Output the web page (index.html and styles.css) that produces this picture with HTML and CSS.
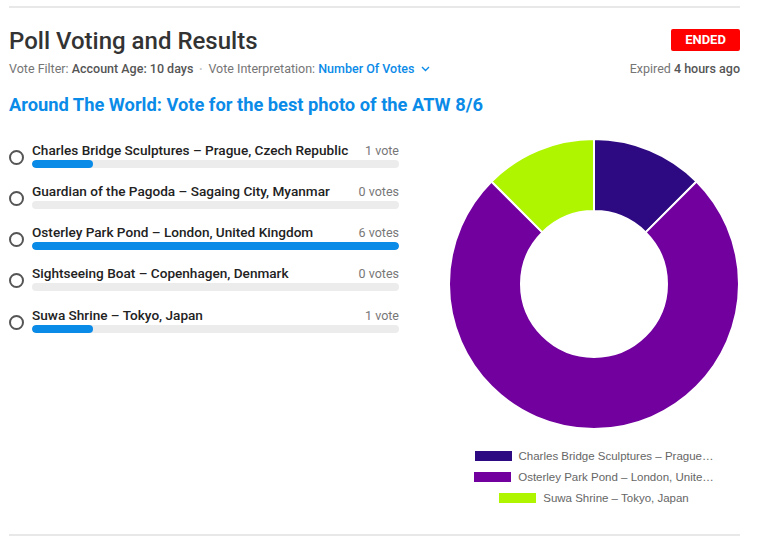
FILE: index.html
```html
<!DOCTYPE html>
<html>
<head>
<meta charset="utf-8">
<link rel="stylesheet" href="styles.css">
</head>
<body>
<div class="poll">
  <div class="header">
    <div class="header-left">
      <h1 class="title">Poll Voting and Results</h1>
      <div class="meta">
        <span>Vote Filter: </span><span class="strong">Account Age: 10 days</span>
        <span class="dot">•</span>
        <span>Vote Interpretation: </span><span class="link">Number Of Votes</span>
        <svg class="chev" width="9" height="6" viewBox="0 0 9 6"><path d="M1 1 L4.5 4.5 L8 1" fill="none" stroke="#0b8be8" stroke-width="1.4"/></svg>
      </div>
    </div>
    <div class="header-right">
      <div class="badge">ENDED</div>
      <div class="expired">Expired <span class="strong">4 hours ago</span></div>
    </div>
  </div>
  <h2 class="question">Around The World: Vote for the best photo of the ATW 8/6</h2>
  <div class="body">
    <div class="options">
      <div class="option">
        <span class="radio"></span>
        <div class="opt-main">
          <div class="opt-line"><span class="opt-label">Charles Bridge Sculptures – Prague, Czech Republic</span><span class="opt-count">1 vote</span></div>
          <div class="bar"><div class="fill" style="width:16.67%"></div></div>
        </div>
      </div>
      <div class="option">
        <span class="radio"></span>
        <div class="opt-main">
          <div class="opt-line"><span class="opt-label">Guardian of the Pagoda – Sagaing City, Myanmar</span><span class="opt-count">0 votes</span></div>
          <div class="bar"><div class="fill" style="width:0%"></div></div>
        </div>
      </div>
      <div class="option">
        <span class="radio"></span>
        <div class="opt-main">
          <div class="opt-line"><span class="opt-label">Osterley Park Pond – London, United Kingdom</span><span class="opt-count">6 votes</span></div>
          <div class="bar"><div class="fill" style="width:100%"></div></div>
        </div>
      </div>
      <div class="option">
        <span class="radio"></span>
        <div class="opt-main">
          <div class="opt-line"><span class="opt-label">Sightseeing Boat – Copenhagen, Denmark</span><span class="opt-count">0 votes</span></div>
          <div class="bar"><div class="fill" style="width:0%"></div></div>
        </div>
      </div>
      <div class="option">
        <span class="radio"></span>
        <div class="opt-main">
          <div class="opt-line"><span class="opt-label">Suwa Shrine – Tokyo, Japan</span><span class="opt-count">1 vote</span></div>
          <div class="bar"><div class="fill" style="width:16.67%"></div></div>
        </div>
      </div>
    </div>
    <div class="chart">
      <svg class="donut" width="292" height="292" viewBox="-1 -1 292 292">
        <path d="M145,0 A145,145 0 0 1 247.53,42.47 L196.62,93.38 A73,73 0 0 0 145,72 Z" fill="#2e0a82" stroke="#fff" stroke-width="2"/>
        <path d="M247.53,42.47 A145,145 0 1 1 42.47,42.47 L93.38,93.38 A73,73 0 1 0 196.62,93.38 Z" fill="#71009f" stroke="#fff" stroke-width="2"/>
        <path d="M42.47,42.47 A145,145 0 0 1 145,0 L145,72 A73,73 0 0 0 93.38,93.38 Z" fill="#aff500" stroke="#fff" stroke-width="2"/>
      </svg>
      <div class="legend">
        <div class="legend-row"><span class="swatch sw1"></span><span>Charles Bridge Sculptures – Prague…</span></div>
        <div class="legend-row"><span class="swatch sw2"></span><span>Osterley Park Pond – London, Unite…</span></div>
        <div class="legend-row"><span class="swatch sw3"></span><span>Suwa Shrine – Tokyo, Japan</span></div>
      </div>
    </div>
  </div>
</div>
</body>
</html>
```
FILE: styles.css
```css
html, body {
  margin: 0;
  padding: 0;
  background: #fff;
}
body {
  font-family: Roboto, "Liberation Sans", Arial, sans-serif;
  color: #222;
}
.poll {
  width: 731px;
  margin: 6px 0 0 9px;
  border-top: 2px solid #e8e8e8;
  border-bottom: 2px solid #e8e8e8;
  height: 530px;
  box-sizing: border-box;
}
.header {
  display: flex;
  justify-content: space-between;
  align-items: flex-start;
  padding-top: 19px;
}
.title {
  margin: 0;
  font-size: 24px;
  font-weight: 500;
  line-height: 28px;
  color: #333;
}
.meta {
  margin-top: 6px;
  font-size: 12.5px;
  line-height: 16px;
  color: #757575;
  display: flex;
  align-items: center;
  white-space: pre;
}
.strong {
  color: #555;
  font-weight: 500;
}
.dot {
  color: #c4c4c4;
  font-size: 9px;
  margin: 0 6px;
}
.link {
  color: #0b8be8;
  font-weight: 500;
}
.chev {
  margin-left: 6px;
}
.header-right {
  display: flex;
  flex-direction: column;
  align-items: flex-end;
  padding-top: 2px;
}
.badge {
  width: 69px;
  height: 22px;
  background: #ff0000;
  color: #fff;
  font-size: 13px;
  font-weight: 700;
  line-height: 22px;
  text-align: center;
  border-radius: 2px;
}
.expired {
  margin-top: 10px;
  font-size: 12.5px;
  line-height: 16px;
  color: #757575;
}
.question {
  margin: 17px 0 0 0;
  font-size: 18.3px;
  font-weight: 700;
  line-height: 22px;
  color: #0b8be8;
}
.body {
  display: flex;
  justify-content: space-between;
  margin-top: 13px;
}
.options {
  width: 390px;
  display: flex;
  flex-direction: column;
  gap: 14.25px;
  padding-top: 11.5px;
}
.option {
  display: flex;
  align-items: flex-start;
}
.radio {
  width: 11px;
  height: 11px;
  border: 2px solid #555;
  border-radius: 50%;
  margin: 9px 8px 0 0;
  flex: none;
}
.opt-main {
  flex: 1;
}
.opt-line {
  display: flex;
  justify-content: space-between;
  align-items: center;
  height: 19px;
  line-height: 19px;
}
.opt-label {
  font-size: 13.6px;
  font-weight: 500;
  color: #222;
}
.opt-count {
  font-size: 12.5px;
  color: #777;
}
.bar {
  height: 8px;
  background: #ececec;
  border-radius: 4px;
  overflow: hidden;
}
.fill {
  height: 100%;
  background: #0b8be8;
  border-radius: 4px;
}
.chart {
  width: 292px;
  display: flex;
  flex-direction: column;
  align-items: center;
  padding-top: 9px;
}
.donut {
  display: block;
}
.legend {
  margin-top: 19px;
  display: flex;
  flex-direction: column;
  align-items: center;
  gap: 7px;
  font-family: "Liberation Sans", Arial, sans-serif;
  font-size: 11.5px;
  color: #666;
  white-space: nowrap;
}
.legend-row {
  display: flex;
  align-items: center;
  line-height: 14px;
}
.swatch {
  width: 37px;
  height: 10px;
  margin-right: 7px;
}
.sw1 { background: #2e0a82; }
.sw2 { background: #71009f; }
.sw3 { background: #aff500; }
```
